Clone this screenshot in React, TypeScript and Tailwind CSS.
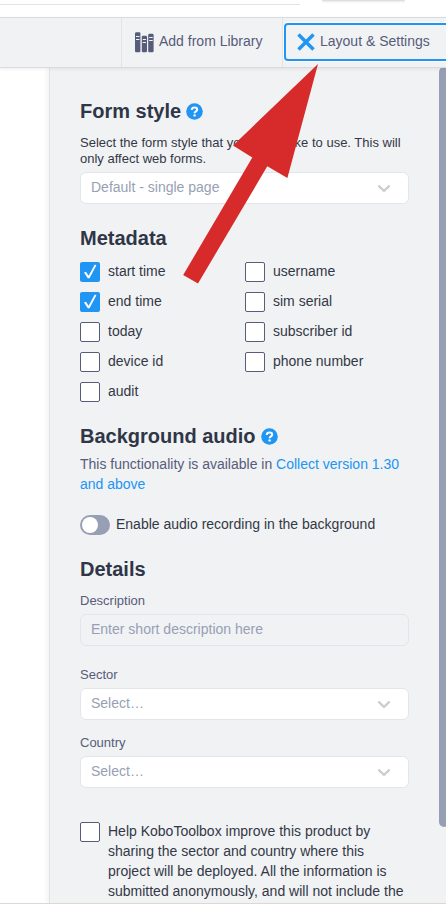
import type { ReactNode } from 'react';

function Help() {
  return (
    <svg width="17" height="17" viewBox="0 0 17 17" className="mt-px shrink-0">
      <circle cx="8.5" cy="8.5" r="8.3" fill="#2095f3" />
      <path d="M5.7 6.9C5.8 5.2 7 4.5 8.5 4.5s2.7.8 2.7 2.2c0 1.7-2.6 1.7-2.6 3.5" fill="none" stroke="#fff" strokeWidth="2" />
      <circle cx="8.6" cy="12.4" r="1.2" fill="#fff" />
    </svg>
  );
}

function Heading({ children, help }: { children: ReactNode; help?: boolean }) {
  return (
    <h2 className="flex h-6 items-center gap-[5px] whitespace-nowrap text-[20px] leading-6 font-bold text-[#2f3647]">
      <span>{children}</span>
      {help && <Help />}
    </h2>
  );
}

function Box({ checked }: { checked?: boolean }) {
  if (checked) {
    return (
      <span className="h-5 w-5 shrink-0 rounded-[2px] bg-[#2095f3]">
        <svg width="20" height="20" viewBox="0 0 20 20">
          <path d="M4 10.6 6 9.7l2.6 4.1L14.8 2.6l1.6.6L9.5 16.3H7.8z" fill="#fff" />
        </svg>
      </span>
    );
  }
  return <span className="h-5 w-5 shrink-0 rounded-[2px] border border-[#565c7a] bg-white" />;
}

function Check({ label, checked }: { label: string; checked?: boolean }) {
  return (
    <label className="flex h-5 gap-2">
      <Box checked={checked} />
      <span className="-mt-px whitespace-nowrap text-[14px] leading-5">{label}</span>
    </label>
  );
}

function Select({ text }: { text: string }) {
  return (
    <div className="flex h-8 w-[329px] items-center justify-between rounded-md border border-[#e3e5ea] bg-white pr-[18px] pl-[10px] text-[14px] leading-5 text-[#979fb4]">
      <span className="-mt-[3px]">{text}</span>
      <svg width="12" height="8" viewBox="0 0 12 8" className="mt-px">
        <path d="M1 1.2 6 6l5-4.8" fill="none" stroke="#ccc" strokeWidth="2.3" strokeLinecap="round" />
      </svg>
    </div>
  );
}

function Books() {
  return (
    <svg width="19" height="21" viewBox="0 0 19 21">
      <g fill="#565c7a">
        <rect x="0" y="0.3" width="5.4" height="19.9" rx="1.2" />
        <rect x="6.8" y="3.7" width="5.2" height="16.5" rx="1.2" />
        <rect x="13.2" y="1.8" width="5.4" height="18.4" rx="1.2" />
      </g>
      <path d="M1 4.5h3.5M1 7.5h3.5M7.7 7.5H11M7.7 10.5H11M14.2 5.5h3.5M14.2 8.5h3.5" stroke="#f1f2f4" strokeWidth="1" />
    </svg>
  );
}

const left = [
  { label: 'start time', checked: true },
  { label: 'end time', checked: true },
  { label: 'today' },
  { label: 'device id' },
  { label: 'audit' },
];
const right = [{ label: 'username' }, { label: 'sim serial' }, { label: 'subscriber id' }, { label: 'phone number' }];

export default function App() {
  return (
    <div className="relative flex h-[904px] w-[446px] flex-col overflow-hidden bg-white font-['Liberation_Sans',Arial,sans-serif] text-[#333846]">
      <div className="flex h-[17px] shrink-0 justify-between">
        <div className="h-[5px] w-[300px] border-b border-[#e3e4ea]" />
        <div className="mr-[41px] h-px w-[83px] rounded-b bg-[#dedede] shadow-[0_1px_2px_#dedede]" />
      </div>

      <header className="relative flex h-[51px] shrink-0 border-y border-[#d9dbde] bg-[#f1f2f4] text-[14px] leading-5 text-[#565c7a] shadow-[0_1px_3px_rgba(0,0,0,0.08)]">
        <div className="w-[122px] shrink-0 border-r border-[#e1e3e7]" />
        <div className="flex w-[161px] shrink-0 gap-[5px] border-r border-[#e1e3e7] pl-[13px]">
          <span className="pt-[14px]"><Books /></span>
          <span className="pt-[13px] whitespace-nowrap">Add from Library</span>
        </div>
        <div className="mt-[5px] ml-[1px] flex h-[38px] w-[175px] shrink-0 rounded-[4px] border-2 border-[#2095f3] pl-[11px] shadow-[0_0_0_1px_#fff]">
          <svg width="18" height="18" viewBox="0 0 18 18" className="mt-[8px] mr-[5px]">
            <path d="m1.5 1.5 15 15M16.5 1.5l-15 15" stroke="#2095f3" strokeWidth="3.5" />
          </svg>
          <span className="pt-[6px] whitespace-nowrap">Layout &amp; Settings</span>
        </div>
      </header>

      <div className="flex h-[835px] shrink-0 overflow-hidden">
        <aside className="ml-[49px] flex w-[397px] shrink-0 justify-between border-l border-[#e1e3e7] bg-[#f1f2f4] shadow-[-2px_0_5px_rgba(0,0,0,0.06)]">
          <main className="ml-[30px] w-[335px] pt-[31px]">
            <Heading help>Form style</Heading>
            <p className="mt-3 w-[329px] text-[13px] leading-4 whitespace-nowrap">
              Select the form style that you would like to use. This will<br />only affect web forms.
            </p>
            <div className="mt-[5px]"><Select text="Default - single page" /></div>

            <div className="mt-[22px]"><Heading>Metadata</Heading></div>
            <div className="mt-3 grid grid-cols-[165px_165px]">
              <div className="flex flex-col gap-[10px]">{left.map((f) => <Check key={f.label} {...f} />)}</div>
              <div className="flex flex-col gap-[10px]">{right.map((f) => <Check key={f.label} {...f} />)}</div>
            </div>

            <div className="mt-[22px]"><Heading help>Background audio</Heading></div>
            <p className="mt-[6px] text-[14px] leading-5 text-[#565c7a]">
              This functionality is available in <a className="text-[#2095f3]">Collect version 1.30<br />and above</a>
            </p>
            <div className="mt-[21px] flex h-5 gap-[6px]">
              <span className="flex h-5 w-[30px] items-center rounded-full bg-[#979fb4] pl-[2px]">
                <span className="h-4 w-4 rounded-full bg-white" />
              </span>
              <span className="-mt-px text-[14px] leading-5">Enable audio recording in the background</span>
            </div>

            <div className="mt-[22px]"><Heading>Details</Heading></div>
            <div className="mt-3 text-[13px] leading-4 text-[#565c7a]">Description</div>
            <div className="mt-[5px] h-8 w-[329px] rounded-md border border-[#e3e5ea] pt-[4px] pl-[10px] text-[14px] leading-5 text-[#979fb4]">
              Enter short description here
            </div>
            <div className="mt-[21px] mb-[5px] text-[13px] leading-4 text-[#565c7a]">Sector</div>
            <Select text="Select…" />
            <div className="mt-[15px] mb-[5px] text-[13px] leading-4 text-[#565c7a]">Country</div>
            <Select text="Select…" />

            <div className="mt-[34px] flex gap-2">
              <Box />
              <p className="-mt-px text-[14px] leading-5 whitespace-nowrap">
                Help KoboToolbox improve this product by<br />
                sharing the sector and country where this<br />
                project will be deployed. All the information is<br />
                submitted anonymously, and will not include the
              </p>
            </div>
          </main>
          <div className="-mt-px -mr-[3px] h-[760px] w-[10px] shrink-0 rounded-[5px] bg-[#979fb4]" />
        </aside>
      </div>
      <div className="h-px shrink-0 bg-[#ddd8d2]" />

      <svg className="absolute top-0 left-0" width="446" height="904" viewBox="0 0 446 904">
        <path d="M318 64 233 145.5 252.3 157.5 183.2 275 198 283.5 267.3 166.3 287.4 178z" fill="#d72a2a" />
      </svg>
    </div>
  );
}
